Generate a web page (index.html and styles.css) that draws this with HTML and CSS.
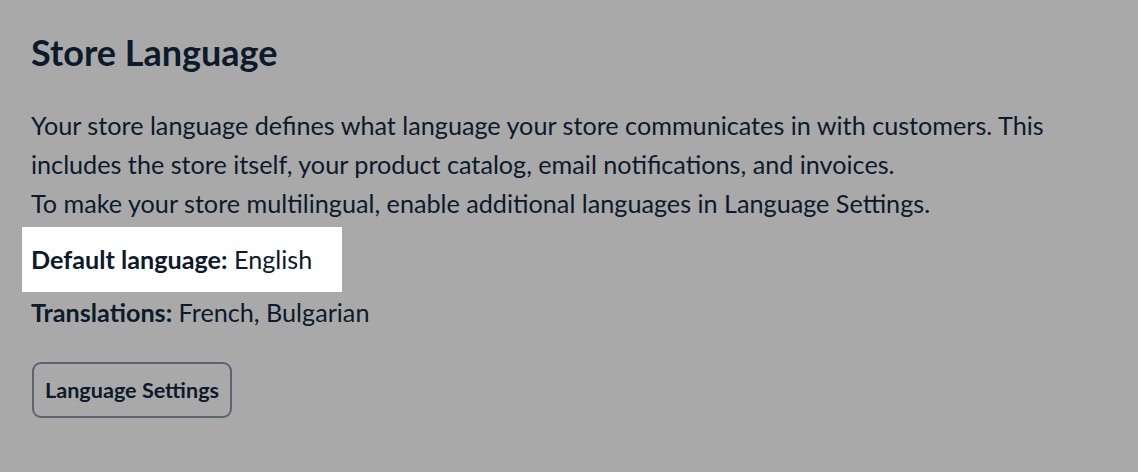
FILE: index.html
```html
<!DOCTYPE html>
<html>
<head>
<meta charset="utf-8">
<link rel="stylesheet" href="styles.css">
</head>
<body>
<main class="page">
  <h1 class="title">Store Language</h1>
  <p class="desc">Your store language defines what language your store communicates in with customers. This includes the store itself, your product catalog, email notifications, and invoices.<br>To make your store multilingual, enable additional languages in Language Settings.</p>
  <div class="highlight"><span class="label">Default language:</span> English</div>
  <div class="row"><span class="label">Translations:</span> French, Bulgarian</div>
  <button class="btn">Language Settings</button>
</main>
</body>
</html>
```
FILE: styles.css
```css
html, body {
  margin: 0;
  padding: 0;
  background: #a9a9a9;
}
body {
  font-family: Lato, "Noto Sans", sans-serif;
  color: #0c1a2b;
  width: 1138px;
  height: 472px;
  overflow: hidden;
}
.page {
  display: flex;
  flex-direction: column;
  align-items: flex-start;
  padding: 30px 0 0 31px;
}
.title {
  font-size: 36px;
  font-weight: 700;
  margin: 0 0 32px 0;
  line-height: 44px;
}
.desc {
  font-size: 25.2px;
  line-height: 39px;
  margin: 0 0 4px 0;
  width: 1060px;
}
.highlight {
  background: #ffffff;
  margin-left: -9px;
  padding: 14px 30px 15px 9px;
  font-size: 25.2px;
  line-height: 36px;
}
.row {
  font-size: 25.2px;
  line-height: 36px;
  margin-top: 2px;
}
.label {
  font-weight: 700;
}
.btn {
  margin: 32px 0 0 1px;
  font-family: inherit;
  font-size: 21.6px;
  font-weight: 700;
  color: #0c1a2b;
  background: transparent;
  border: 2px solid #5b6571;
  border-radius: 9px;
  height: 56px;
  padding: 0 11px;
}
```
